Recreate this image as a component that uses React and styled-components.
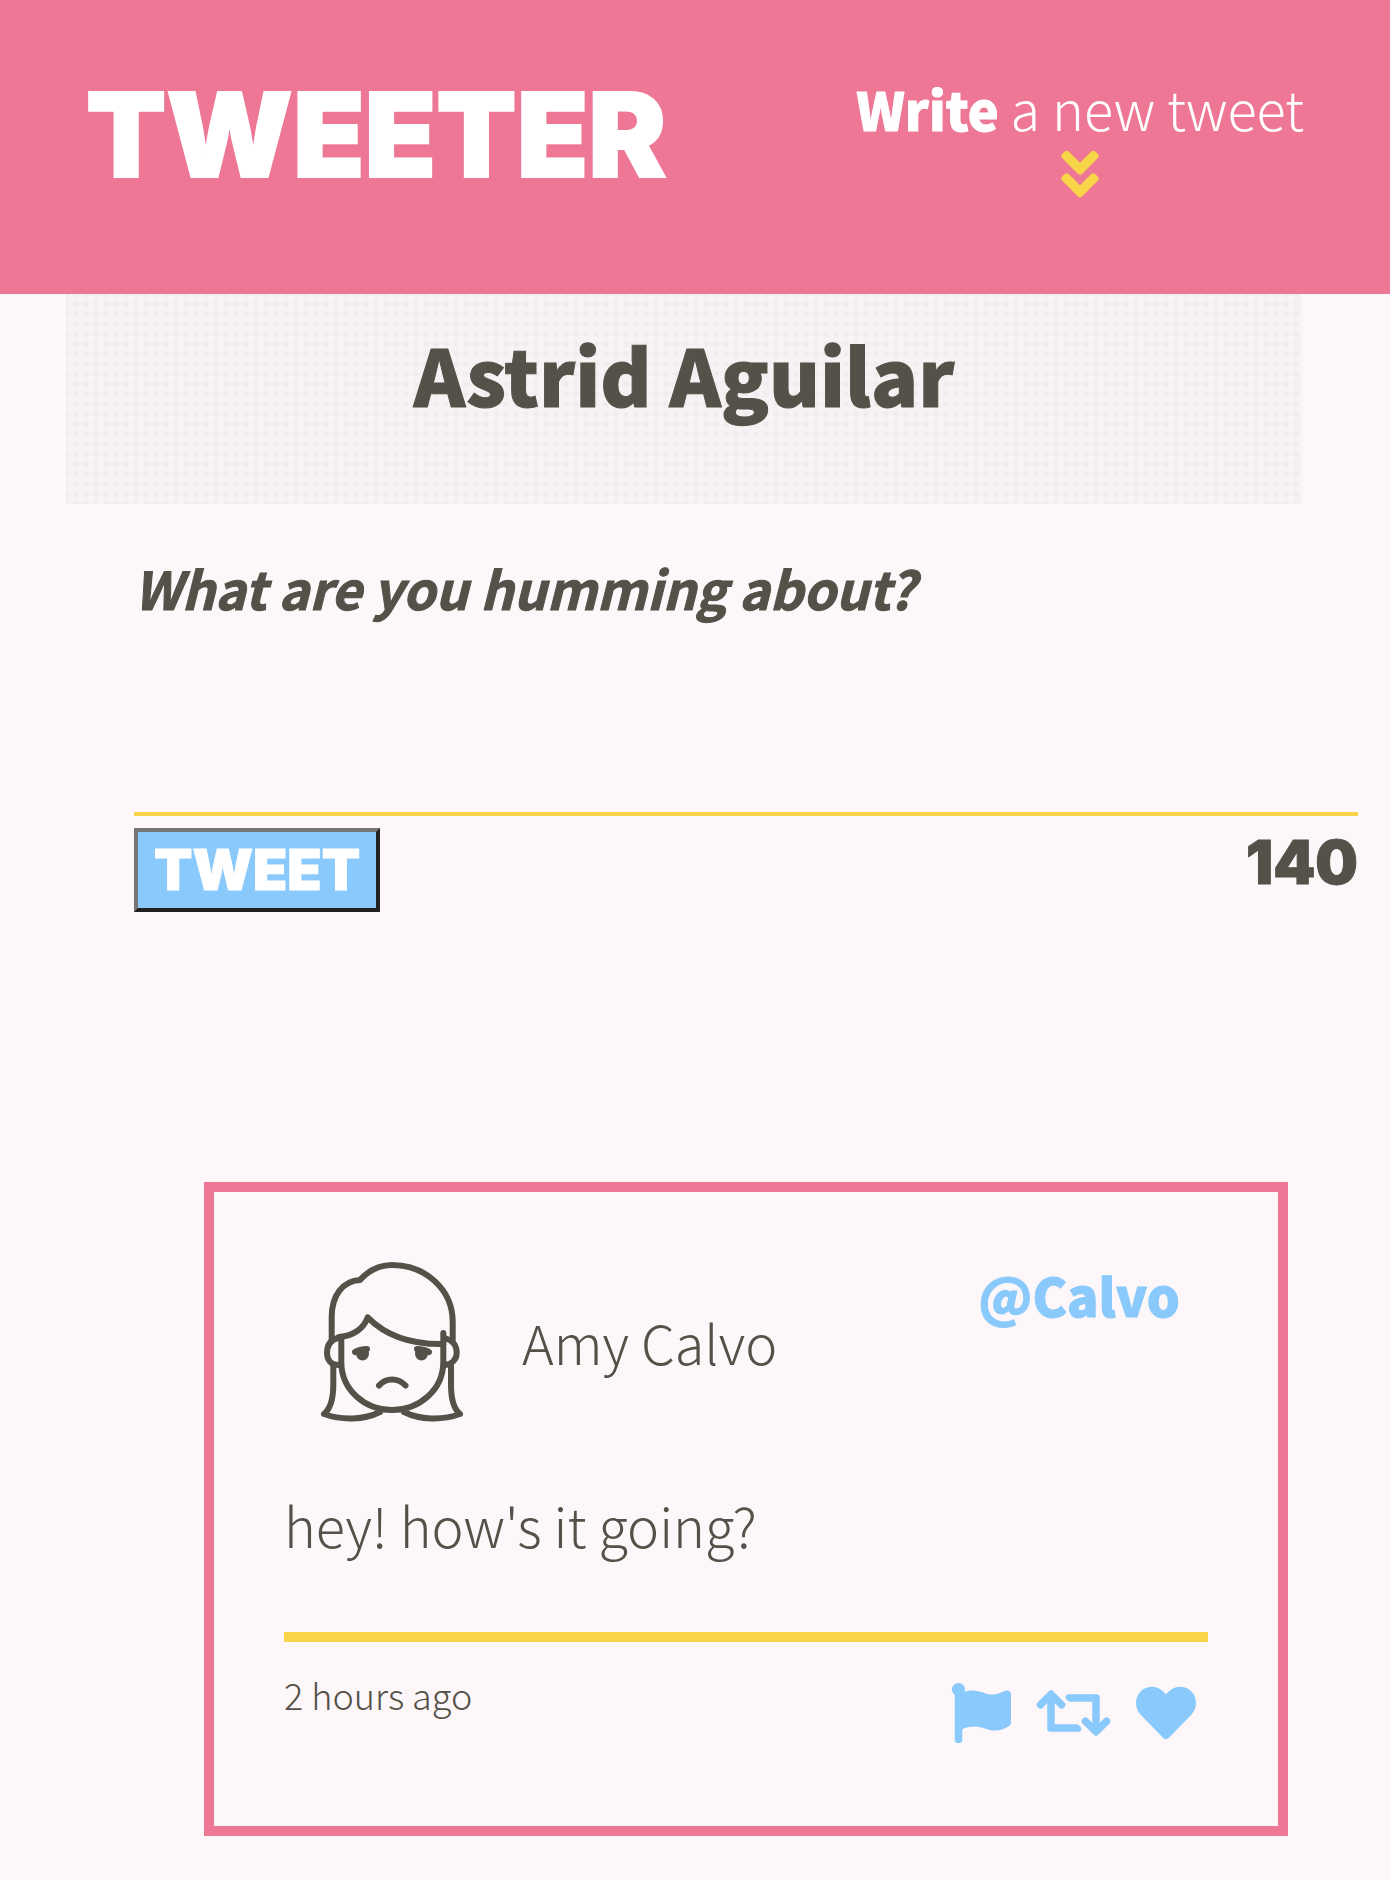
import React, { useState } from "react";
import styled, { createGlobalStyle } from "styled-components";
import { FaAngleDoubleDown, FaFlag, FaRetweet, FaHeart } from "react-icons/fa";

const color = {
  pink: "#ed7795",
  paper: "#fdf7f9",
  ink: "#545149",
  sky: "#8ac9fb",
  yellow: "#f8d548",
};
const sans = `"Noto Sans CJK JP", "Noto Sans", sans-serif`;
const display = `Inter, "Liberation Sans", sans-serif`;

const GlobalStyle = createGlobalStyle`
  * { box-sizing: border-box; }
  body {
    margin: 0;
    background: ${color.paper};
    color: ${color.ink};
    font-family: ${sans};
    font-size: 54px;
    font-weight: 300;
    line-height: 76px;
  }
`;

const TopBar = styled.header`
  display: flex;
  justify-content: space-between;
  align-items: flex-start;
  padding: 73px 86px 90px;
  background: ${color.pink};
  color: #fff;
`;

const Logo = styled.h1`
  margin: 0;
  font-family: ${display};
  font-size: 117px;
  font-weight: 900;
  line-height: 124px;
  -webkit-text-stroke: 2px currentColor;
`;

const ComposeLink = styled.button`
  display: flex;
  flex-direction: column;
  align-items: center;
  padding: 0;
  border: 0;
  background: none;
  color: inherit;
  font: inherit;
  line-height: 70px;
  cursor: pointer;

  b {
    font-size: 52px;
    font-weight: 900;
    -webkit-text-stroke: 1px currentColor;
  }
  svg { color: ${color.yellow}; font-size: 60px; }
`;

const Profile = styled.section`
  margin: 0 88px 0 66px;
  padding: 29px 20px 81px;
  background: radial-gradient(circle at center, #efe8eb 0, #f3edf0 2px, #f8f2f4 4px) -5px -5px / 10px 10px;
  text-align: center;
`;

const ProfileName = styled.h2`
  margin: 0;
  font-size: 78px;
  font-weight: 900;
  line-height: 100px;
  -webkit-text-stroke: 1px currentColor;
`;

const Composer = styled.form`
  margin: 41px 32px 0 134px;
`;

const TweetInput = styled.textarea`
  display: block;
  width: 100%;
  height: 271px;
  padding: 0;
  border: 0;
  border-bottom: 4px solid ${color.yellow};
  outline: 0;
  resize: none;
  background: transparent;
  color: ${color.ink};
  font: 300 52px/86px ${sans};

  &::placeholder {
    color: ${color.ink};
    font-style: italic;
    font-weight: 700;
    opacity: 1;
    -webkit-text-stroke: 1px currentColor;
  }
`;

const ComposerFooter = styled.div`
  display: flex;
  justify-content: space-between;
  align-items: flex-start;
  margin-top: 12px;
  font-family: ${display};
  font-size: 60px;
  font-weight: 900;
  line-height: 68px;
  -webkit-text-stroke: 1px currentColor;
`;

const SubmitButton = styled.button`
  padding: 0 16px;
  border: 4px solid;
  border-color: #767676 #212121 #212121 #767676;
  background: ${color.sky};
  color: #fff;
  font: inherit;
  font-size: 56px;
  line-height: 76px;
  cursor: pointer;
`;

const Feed = styled.main`
  margin: 270px 102px 44px 204px;
`;

const Card = styled.article`
  padding: 70px;
  border: 10px solid ${color.pink};
`;

const CardHeader = styled.header`
  display: flex;
  align-items: center;
  padding: 0 28px;
`;

const AvatarDrawing = styled.svg`
  flex: none;
  width: 160px;
  height: 160px;
  margin-right: 50px;
  fill: none;
  stroke: ${color.ink};
  stroke-width: 6;
  stroke-linecap: round;
  stroke-linejoin: round;
`;

const Handle = styled.a`
  align-self: flex-start;
  margin-left: auto;
  color: ${color.sky};
  font-size: 52px;
  font-weight: 900;
  line-height: 66px;
  text-decoration: none;
  -webkit-text-stroke: 1px currentColor;
`;

const Message = styled.p`
  margin: 65px 0 69px;
`;

const CardFooter = styled.footer`
  display: flex;
  justify-content: space-between;
  align-items: flex-start;
  padding: 25px 12px 13px 0;
  border-top: 10px solid ${color.yellow};
`;

const Timestamp = styled.time`
  font-size: 36px;
  line-height: 54px;
`;

const Actions = styled.div`
  display: flex;
  gap: 25px;
  margin-top: 16px;
`;

const IconButton = styled.button`
  display: flex;
  padding: 0;
  border: 0;
  background: none;
  color: ${color.sky};
  cursor: pointer;

  svg {
    width: ${(p) => (p.$wide ? 75 : 60)}px;
    height: 60px;
  }
`;

function Avatar() {
  return (
    <AvatarDrawing viewBox="0 0 160 160" role="img" aria-label="Amy Calvo">
      <path d="M19.700 78V55C19.700 33 31 19 48 18C58 7 68 3 80 3C113 3 140.700 27 140.700 60V78" />
      <path d="M27 75C42 74 52 66 55.700 55.300C75 75 100 82.500 131.300 82" />
      <path d="M29.300 76V100C29.300 128 53 148 80 148S131.300 128 131.300 100V71" />
      <path d="M26 76C18 78 15 84 15 91S19 103 27 103" />
      <path d="M134 76.500C142 79 144.700 85 144.700 91S140 103 132 103" />
      <path d="M21.300 104V123C21.300 136 18 147 12 152C30 158.500 52 158 68 150" />
      <path d="M139 104V123C139 136 142 147 148 152C130 158.500 108 158 92 150" />
      <path d="M67 123.500C74 115.500 86 115.500 93.500 123.500" />
      <path d="M43 90C46 88 51 87 55 87M105 87C109 87 114 88 117 90" />
      <g fill={color.ink} stroke="none">
        <circle cx="50.500" cy="92" r="6.500" />
        <circle cx="109.500" cy="92" r="6.500" />
      </g>
    </AvatarDrawing>
  );
}

export default function App() {
  const [text, setText] = useState("");
  return (
    <>
      <GlobalStyle />
      <TopBar>
        <Logo>TWEETER</Logo>
        <ComposeLink type="button">
          <span><b>Write</b> a new tweet</span>
          <FaAngleDoubleDown aria-hidden="true" />
        </ComposeLink>
      </TopBar>
      <Profile>
        <ProfileName>Astrid Aguilar</ProfileName>
      </Profile>
      <Composer onSubmit={(e) => e.preventDefault()}>
        <TweetInput
          aria-label="What are you humming about?"
          placeholder="What are you humming about?"
          value={text}
          onChange={(e) => setText(e.target.value)}
        />
        <ComposerFooter>
          <SubmitButton type="submit">TWEET</SubmitButton>
          <output>{140 - text.length}</output>
        </ComposerFooter>
      </Composer>
      <Feed>
        <Card>
          <CardHeader>
            <Avatar />
            <span>Amy Calvo</span>
            <Handle href="#calvo">@Calvo</Handle>
          </CardHeader>
          <Message>hey! how's it going?</Message>
          <CardFooter>
            <Timestamp>2 hours ago</Timestamp>
            <Actions>
              <IconButton type="button" aria-label="Report"><FaFlag /></IconButton>
              <IconButton type="button" aria-label="Retweet" $wide><FaRetweet /></IconButton>
              <IconButton type="button" aria-label="Like"><FaHeart /></IconButton>
            </Actions>
          </CardFooter>
        </Card>
      </Feed>
    </>
  );
}
